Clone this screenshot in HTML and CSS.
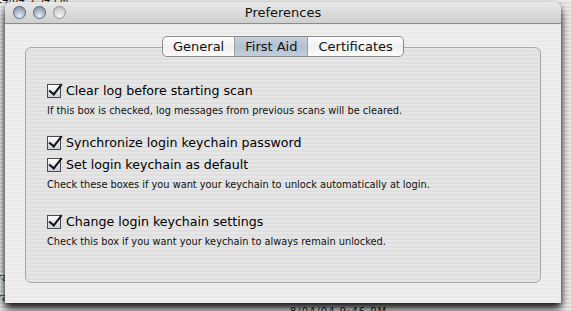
FILE: index.html
```html
<!DOCTYPE html>
<html>
<head>
	<meta http-equiv="Content-Type" content="text/html; charset=UTF-8">
	<title>Preferences</title>
	<link rel="stylesheet" href="styles.css">
</head>
<body>
<div class="backdrop">
	<div class="bd-top">24/04 9:54 PM</div>
	<div class="bd-left">ra<br>ra</div>
	<div class="bd-bottom">8/04/04 9:46 PM</div>
</div>
<div class="window">
	<div class="titlebar">
		<div class="lights">
			<span class="light blue"></span>
			<span class="light blue"></span>
			<span class="light grey"></span>
		</div>
		<div class="title">Preferences</div>
	</div>
	<div class="content">
		<div class="tabbox">
			<div class="tabs">
				<span class="tab">General</span>
				<span class="tab selected">First Aid</span>
				<span class="tab">Certificates</span>
			</div>
			<div class="pane">
				<label class="check"><span class="box"></span>Clear log before starting scan</label>
				<p class="hint">If this box is checked, log messages from previous scans will be cleared.</p>

				<label class="check group2"><span class="box"></span>Synchronize login keychain password</label>
				<label class="check"><span class="box"></span>Set login keychain as default</label>
				<p class="hint">Check these boxes if you want your keychain to unlock automatically at login.</p>

				<label class="check group3"><span class="box"></span>Change login keychain settings</label>
				<p class="hint">Check this box if you want your keychain to always remain unlocked.</p>
			</div>
		</div>
	</div>
</div>
</body>
</html>
```
FILE: styles.css
```css
body {
	margin: 0;
	width: 571px;
	height: 311px;
	overflow: hidden;
	position: relative;
	font-family: "DejaVu Sans", "Open Sans", sans-serif;
}
.backdrop {
	position: absolute;
	inset: 0;
	background: repeating-linear-gradient(#ededed 0 2px, #dcdcdc 2px 4px);
	font-size: 10px;
	color: #222;
}
.bd-top { position: absolute; left: -4px; top: -6px; }
.bd-left { position: absolute; left: -2px; top: 268px; line-height: 20px; }
.bd-bottom { position: absolute; left: 290px; top: 306px; letter-spacing: 1px; }

.window {
	position: absolute;
	left: 5px;
	top: 2px;
	width: 556px;
	height: 301px;
	border-radius: 7px 7px 0 0;
	background: repeating-linear-gradient(#efefef 0 2px, #e9e9e9 2px 4px);
	box-shadow: 0 6px 10px rgba(0,0,0,0.85), 0 2px 4px rgba(0,0,0,0.4);
	display: flex;
	flex-direction: column;
}
.titlebar {
	height: 21px;
	border-bottom: 1px solid #8a8a8a;
	border-radius: 7px 7px 0 0;
	background: linear-gradient(#e8e8e8, #cfcfcf);
	display: flex;
	align-items: center;
	position: relative;
}
.lights {
	display: flex;
	gap: 7px;
	padding-left: 8px;
}
.light {
	width: 13px;
	height: 13px;
	border-radius: 50%;
	box-shadow: inset 0 0 0 1px #6b7585;
}
.light.blue { background: radial-gradient(circle at 50% 75%, #e6eef8 0, #9eabbd 55%, #6d7b90 100%); }
.light.grey { background: radial-gradient(circle at 50% 75%, #f4f4f4 0, #cdcdcd 60%, #a9a9a9 100%); box-shadow: inset 0 0 0 1px #9a9a9a; }
.title {
	position: absolute;
	left: 0;
	right: 0;
	text-align: center;
	font-size: 13px;
	color: #111;
}
.content {
	flex: 1;
	padding: 23px 20px 20px 20px;
}
.tabbox {
	position: relative;
	height: 234px;
	border: 1px solid #a9a9a9;
	border-radius: 6px;
	background: repeating-linear-gradient(#e6e6e6 0 2px, #dfdfdf 2px 4px);
}
.tabs {
	position: absolute;
	top: -12px;
	left: 136px;
	display: flex;
	border: 1px solid #8c8c8c;
	border-radius: 5px;
	background: linear-gradient(#ffffff, #f0f0f0 50%, #fbfbfb);
	overflow: hidden;
	height: 19px;
}
.tab {
	font-size: 13px;
	line-height: 19px;
	padding: 0 10px;
	color: #111;
	border-left: 1px solid #a0a0a0;
}
.tab:first-child { border-left: none; }
.tab.selected {
	background: linear-gradient(#c6d1de, #b2c0d1 50%, #c3cedb);
}
.pane {
	padding: 31px 0 0 21px;
}
.check {
	display: flex;
	align-items: center;
	font-size: 12.6px;
	color: #000;
	height: 22px;
}
.check.group2 { margin-top: 13px; }
.check.group3 { margin-top: 18px; }
.box {
	width: 12px;
	height: 12px;
	border: 1px solid #4a4a4a;
	background: linear-gradient(#fdfdfd, #c9d0da);
	margin-right: 5px;
	margin-top: 2px;
	position: relative;
}
.box::after {
	content: "";
	position: absolute;
	left: 4px;
	top: -4px;
	width: 5px;
	height: 12px;
	border-right: 2.5px solid #111;
	border-bottom: 2.5px solid #111;
	transform: rotate(38deg);
}
.hint {
	margin: 2px 0 0 0;
	font-size: 9.8px;
	line-height: 15px;
	color: #111;
}
```
